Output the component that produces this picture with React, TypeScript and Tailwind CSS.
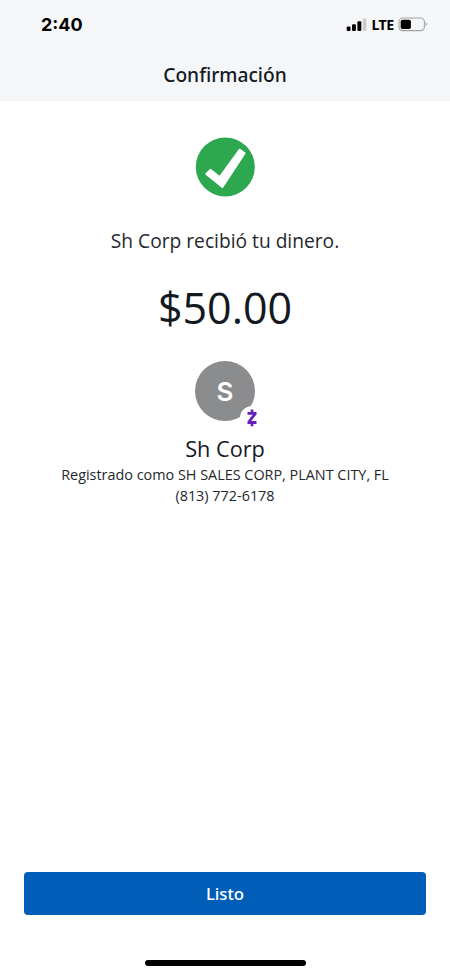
function SignalIcon() {
  return (
    <svg aria-label="Cobertura" width="21" height="14" viewBox="0 0 21 14">
      <rect x="0.7" y="8.4" width="3.8" height="4.6" rx="1.1" fill="#000" />
      <rect x="6" y="6.2" width="3.9" height="6.8" rx="1.1" fill="#000" />
      <rect x="11.4" y="3.2" width="3.9" height="9.8" rx="1.1" fill="#000" />
      <rect x="16.7" y="0.5" width="3.6" height="12.5" rx="1.1" fill="#cbcccd" />
    </svg>
  );
}

function BatteryIcon() {
  return (
    <svg aria-label="Batería" width="30" height="15" viewBox="0 0 30 15">
      <rect x="1" y="1" width="25.4" height="12.6" rx="3.8" fill="none" stroke="#a2a3a5" strokeWidth="1.1" />
      <rect x="2.7" y="2.7" width="10.2" height="9.3" rx="1.8" fill="#000" />
      <path d="M27.6 5.3c1.5.7 1.5 3.3 0 4z" fill="#8f9092" />
    </svg>
  );
}

function StatusBar() {
  return (
    <div className="flex h-[50px] items-center justify-between pl-[41px] pr-[22.5px]">
      <span className="font-['Inter',sans-serif] text-[18px] font-bold leading-6 text-black">
        2:40
      </span>
      <div className="flex items-center pb-px">
        <SignalIcon />
        <span className="ml-[5px] mr-1 pt-px font-['Noto_Sans',sans-serif] text-[14.2px] font-bold leading-5 tracking-[-0.6px] text-black">
          LTE
        </span>
        <BatteryIcon />
      </div>
    </div>
  );
}

function SuccessIcon() {
  return (
    <svg aria-label="Completado" width="60" height="60" viewBox="0 0 60 60">
      <circle cx="30.3" cy="29.9" r="29.5" fill="#2da84f" />
      <path
        d="M11.3 36.9 15.4 32.9 24.8 40.2 44.8 12.7 49.6 16.2 27.4 50z"
        fill="#fff"
        stroke="#fff"
        strokeWidth="2"
        strokeLinejoin="round"
      />
    </svg>
  );
}

function ZelleMark() {
  return (
    <svg aria-label="Zelle" width="12" height="18" viewBox="0 0 12 18">
      <path d="M6 0.5v3M6 14v3.3" stroke="#6520bd" strokeWidth="2.6" fill="none" />
      <path
        d="M1.5 2.9h9v2.5l-5.2 6.7h5.2v2.9h-9v-2.6l5.1-6.6H1.5z"
        fill="#6520bd"
      />
    </svg>
  );
}

function Avatar({ initial }: { initial: string }) {
  return (
    <div className="relative flex size-[60px] items-center justify-center rounded-full bg-[#8b8c8e]">
      <span className="pt-px font-['Inter',sans-serif] text-[26px] font-semibold leading-none text-white">
        {initial}
      </span>
      <div className="absolute -right-[9px] -bottom-[9px] flex size-6 items-center justify-center rounded-full bg-white">
        <ZelleMark />
      </div>
    </div>
  );
}

export default function App() {
  return (
    <div className="flex h-[976px] w-[450px] flex-col bg-white font-['Open_Sans',sans-serif] text-[#14191f]">
      <header className="h-[101px] bg-[#f5f6f8]">
        <StatusBar />
        <h1 className="text-center font-['Noto_Sans',sans-serif] text-[19.2px] font-medium leading-[50px]">
          Confirmación
        </h1>
      </header>

      <main className="flex grow flex-col items-center pt-9">
        <SuccessIcon />
        <p className="mt-[30px] text-[19.2px] leading-7 text-[#24282c]">
          Sh Corp recibió tu dinero.
        </p>
        <p className="mt-[23px] text-[43px] leading-[60px]">$50.00</p>
        <div className="mt-[23px]">
          <Avatar initial="S" />
        </div>
        <h2 className="mt-3 text-[21.7px] leading-8">Sh Corp</h2>
        <p className="-mt-px text-center text-[14.4px] leading-[21px] text-[#24282c]">
          Registrado como SH SALES CORP, PLANT CITY, FL
          <br />
          (813) 772-6178
        </p>
      </main>

      <footer className="flex flex-col items-center px-6 pb-[10px]">
        <button
          type="button"
          className="h-[43px] w-full rounded-[4px] bg-[#005eb8] pt-px font-['Noto_Sans',sans-serif] text-[16.7px] font-medium text-white"
        >
          Listo
        </button>
        <div className="mt-[45px] h-[6px] w-[161px] rounded-full bg-black" />
      </footer>
    </div>
  );
}
